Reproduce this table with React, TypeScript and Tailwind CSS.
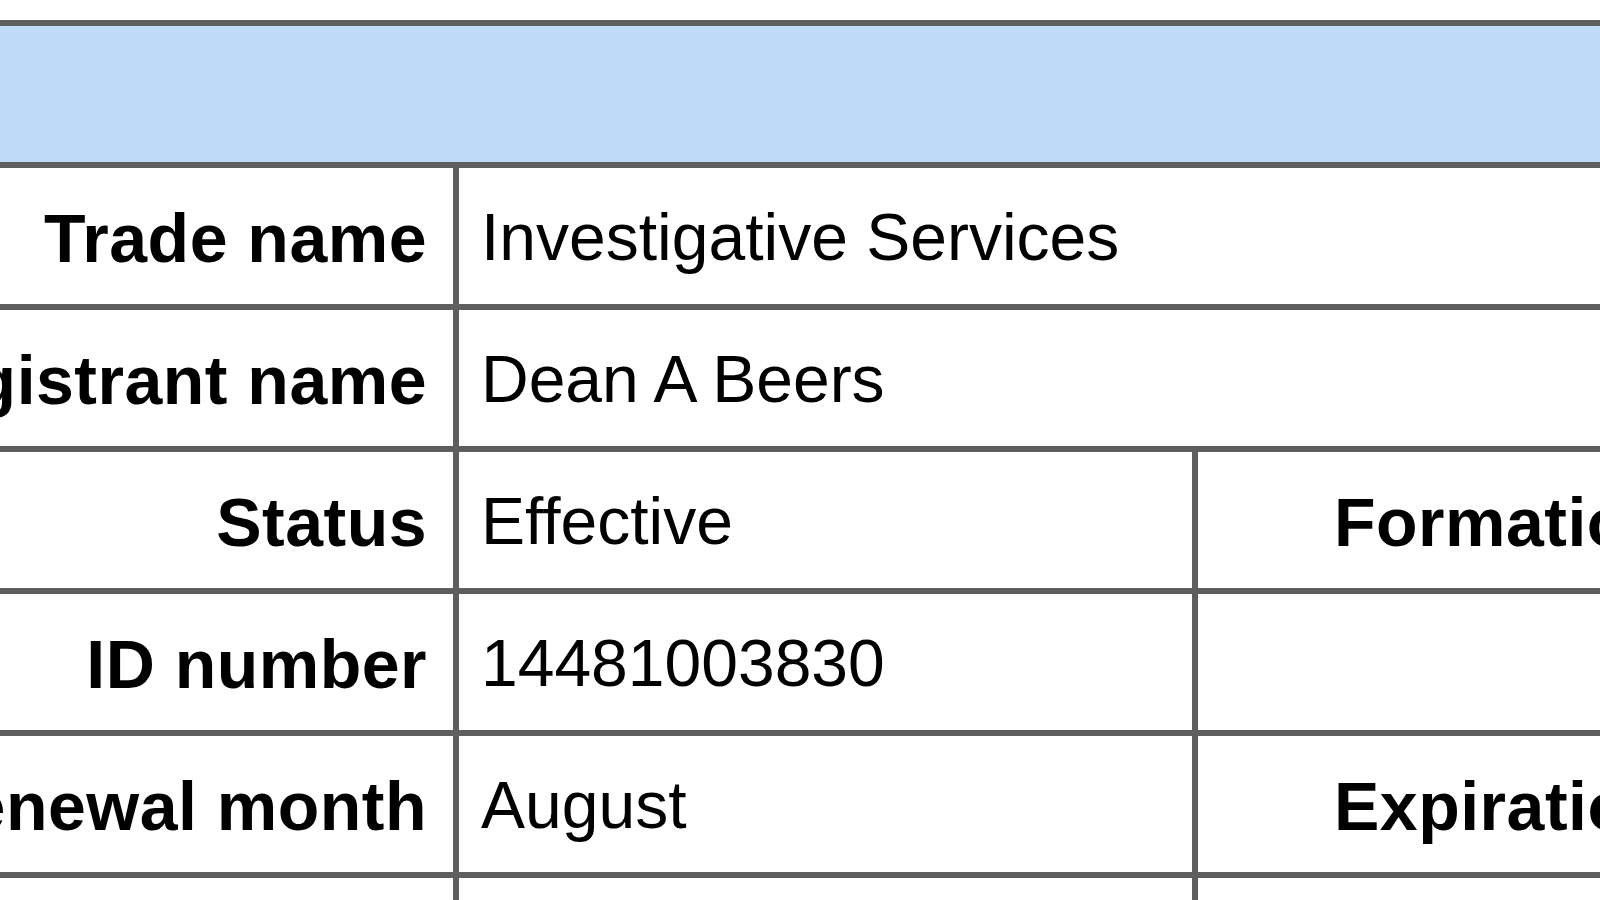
const rows: { label: string; value: string; extra?: { label: string; value: string } }[] = [
  { label: 'Trade name', value: 'Investigative Services' },
  { label: 'Registrant name', value: 'Dean A Beers' },
  { label: 'Status', value: 'Effective', extra: { label: 'Formation date', value: '' } },
  { label: 'ID number', value: '14481003830', extra: { label: '', value: '' } },
  { label: 'Renewal month', value: 'August', extra: { label: 'Expiration date', value: '' } },
  { label: 'Registrant address', value: '', extra: { label: '', value: '' } },
];

export default function App() {
  return (
    <div className="w-[1600px] h-[900px] overflow-hidden bg-white pt-[20px] font-['Liberation_Sans',Arial,sans-serif] text-black">
      <div className="ml-[-147px] w-[2400px] border-t-[6px] border-[#5e5e5e]">
        {/* Header band */}
        <div className="h-[142px] bg-[#c0dbf8] border-b-[6px] border-[#5e5e5e]" />

        {rows.map(row => (
          <div key={row.label} className="flex h-[142px] border-b-[6px] border-[#5e5e5e]">
            <div className="w-[606px] shrink-0 border-r-[6px] border-[#5e5e5e] flex items-center justify-end pr-[26px] pt-[3px] text-[68px] font-bold tracking-[0.5px] whitespace-nowrap">
              {row.label}
            </div>
            {row.extra ? (
              <>
                <div className="w-[739px] shrink-0 border-r-[6px] border-[#5e5e5e] flex items-center pl-[22px] pt-[3px] text-[66px] whitespace-nowrap">
                  {row.value}
                </div>
                <div className="w-[700px] shrink-0 border-r-[6px] border-[#5e5e5e] flex items-center pl-[136px] pt-[3px] text-[68px] font-bold tracking-[0.5px] whitespace-nowrap">
                  {row.extra.label}
                </div>
                <div className="flex-1 flex items-center pl-[22px] pt-[3px] text-[66px] whitespace-nowrap">
                  {row.extra.value}
                </div>
              </>
            ) : (
              <div className="flex-1 flex items-center pl-[22px] pt-[3px] text-[66px] whitespace-nowrap">
                {row.value}
              </div>
            )}
          </div>
        ))}
      </div>
    </div>
  );
}
